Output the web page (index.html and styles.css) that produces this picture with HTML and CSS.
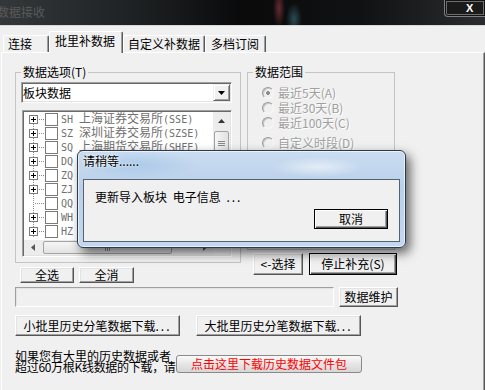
FILE: index.html
```html
<!DOCTYPE html>
<html lang="zh-CN">
<head>
    <meta charset="UTF-8">
    <title>数据接收</title>
    <link rel="stylesheet" href="styles.css">
</head>
<body>
    <div class="titlebar">
        <span class="title">数据接收</span>
        <div class="close-btn">X</div>
    </div>

    <div class="tabs">
        <div class="tab tab-conn">连接</div>
        <div class="tab tab-batch active">批里补数据</div>
        <div class="tab tab-custom">自定义补数据</div>
        <div class="tab tab-sub">多档订阅</div>
    </div>

    <div class="panel">
        <div class="top-row">
            <div class="col-left">
                <fieldset class="group group-opts">
                    <legend>数据选项(T)</legend>
                    <div class="combo">
                        <span>板块数据</span>
                        <div class="combo-btn">
                            <svg width="7" height="4" viewBox="0 0 7 4"><polygon points="0,0 7,0 3.5,4" fill="#000"/></svg>
                        </div>
                    </div>
                    <div class="listbox">
                        <div class="tree">
                            <div class="node"><i class="exp"></i><i class="link"></i><i class="check"></i><span class="label"><span class="en">SH </span>上海证券交易所<span class="en">(SSE)</span></span></div>
                            <div class="node"><i class="exp"></i><i class="link"></i><i class="check"></i><span class="label"><span class="en">SZ </span>深圳证券交易所<span class="en">(SZSE)</span></span></div>
                            <div class="node"><i class="exp"></i><i class="link"></i><i class="check"></i><span class="label"><span class="en">SQ </span>上海期货交易所<span class="en">(SHFE)</span></span></div>
                            <div class="node"><i class="exp"></i><i class="link"></i><i class="check"></i><span class="label"><span class="en">DQ </span>大连商品交易所<span class="en">(DCE)</span></span></div>
                            <div class="node"><i class="exp"></i><i class="link"></i><i class="check"></i><span class="label"><span class="en">ZQ </span>郑州商品交易所<span class="en">(CZCE)</span></span></div>
                            <div class="node"><i class="exp"></i><i class="link"></i><i class="check"></i><span class="label"><span class="en">ZJ </span>中国金融期货交易所<span class="en">(CFFEX)</span></span></div>
                            <div class="node leaf"><i class="link"></i><i class="check"></i><span class="label"><span class="en">QQ </span>全球指数</span></div>
                            <div class="node"><i class="exp"></i><i class="link"></i><i class="check"></i><span class="label"><span class="en">WH </span>外汇</span></div>
                            <div class="node"><i class="exp"></i><i class="link"></i><i class="check"></i><span class="label"><span class="en">HZ </span>香港指数</span></div>
                        </div>
                        <div class="vscroll">
                            <div class="sb-arrow">
                                <svg width="7" height="4" viewBox="0 0 7 4"><polygon points="0,4 7,4 3.5,0" fill="#333"/></svg>
                            </div>
                            <div class="sb-thumb-v">
                                <svg width="7" height="7" viewBox="0 0 7 7"><path d="M0 1.5h7M0 3.5h7M0 5.5h7" stroke="#888" stroke-width="1"/></svg>
                            </div>
                        </div>
                        <div class="hscroll">
                            <div class="sb-arrow">
                                <svg width="4" height="7" viewBox="0 0 4 7"><polygon points="4,0 4,7 0,3.5" fill="#555"/></svg>
                            </div>
                            <div class="sb-thumb-h">
                                <svg width="7" height="7" viewBox="0 0 7 7"><path d="M1.5 0v7M3.5 0v7M5.5 0v7" stroke="#888" stroke-width="1"/></svg>
                            </div>
                            <div class="sb-track"></div>
                            <div class="sb-arrow">
                                <svg width="4" height="7" viewBox="0 0 4 7"><polygon points="0,0 0,7 4,3.5" fill="#555"/></svg>
                            </div>
                        </div>
                        <div class="sb-corner"></div>
                    </div>
                </fieldset>
                <div class="btn-row">
                    <button class="btn btn-all">全选</button>
                    <button class="btn btn-none">全消</button>
                </div>
            </div>

            <div class="col-right">
                <fieldset class="group group-range">
                    <legend>数据范围</legend>
                    <div class="radio checked"><i></i>最近5天(A)</div>
                    <div class="radio"><i></i>最近30天(B)</div>
                    <div class="radio"><i></i>最近100天(C)</div>
                    <div class="radio radio-custom"><i></i>自定义时段(D)</div>
                </fieldset>
                <div class="btn-row">
                    <button class="btn btn-pick">&lt;-选择</button>
                    <button class="btn default btn-stop">停止补充(S)</button>
                </div>
            </div>
        </div>

        <div class="maint-row">
            <div class="field"></div>
            <button class="btn btn-maint">数据维护</button>
        </div>

        <div class="dl-row">
            <button class="btn btn-dl">小批里历史分笔数据下载<span class="dots">...</span></button>
            <button class="btn btn-dl">大批里历史分笔数据下载<span class="dots">...</span></button>
        </div>

        <div class="pkg-row">
            <div class="pkg-text">
                <div>如果您有大里的历史数据或者</div>
                <div class="tight">超过60万根K线数据的下载，请</div>
            </div>
            <button class="btn-pkg">点击这里下载历史数据文件包</button>
        </div>
    </div>

    <!-- 进度对话框 -->
    <div class="dialog">
        <div class="dialog-title">请稍等......</div>
        <div class="dialog-body">
            <div class="dialog-msg">更新导入板块 电子信息 <span class="dots">...</span></div>
            <div class="dialog-actions">
                <button class="btn default btn-cancel">取消</button>
            </div>
        </div>
    </div>
</body>
</html>
```

FILE: styles.css
```css
* {
    box-sizing: border-box;
}
html, body {
    margin: 0;
}
body {
    width: 485px;
    height: 390px;
    overflow: hidden;
    position: relative;
    background: #f0f0f0;
    font-family: "Noto Sans CJK SC", "Liberation Sans", sans-serif;
    font-size: 12px;
    line-height: 14px;
    color: #000;
}

/* title bar */
.titlebar {
    height: 26px;
    display: flex;
    justify-content: space-between;
    align-items: flex-start;
    border-bottom: 1px solid #d8d8d8;
    background:
        radial-gradient(6px 20px at 279px 8px, rgba(190,70,80,.5), transparent),
        radial-gradient(8px 16px at 294px 19px, rgba(90,170,185,.4), transparent),
        linear-gradient(90deg, #34383b 0%, #1e2123 28%, #0a0a0b 50%, #111213 75%, #2a2c2f 100%);
}
.title {
    margin-left: -3px;
    padding-top: 5px;
    color: #5a5a5a;
}
.close-btn {
    width: 41px;
    height: 17px;
    padding: 2px 0 0 21px;
    border: 1px solid #7e7e7e;
    border-top: 0;
    border-right: 0;
    border-radius: 0 0 0 4px;
    background: #1a1a1a;
    box-shadow: inset 0 0 0 1px #111, inset 0 0 0 2px #6e6e6e;
    color: #fff;
    font-family: "Liberation Sans", sans-serif;
    font-weight: bold;
    font-size: 11px;
    line-height: 12px;
}

/* tabs */
.tabs {
    display: flex;
    align-items: flex-end;
    height: 21px;
    margin-top: 5px;
    padding-left: 3px;
    position: relative;
    z-index: 1;
}
.tab {
    height: 17px;
    padding-left: 4px;
    border-top: 1px solid #fff;
    border-left: 1px solid #fff;
    border-right: 1px solid #5a5a5a;
    border-radius: 2px 2px 0 0;
    box-shadow: inset -1px 0 #a0a0a0;
    line-height: 15px;
    white-space: nowrap;
}
.tab.active {
    height: 22px;
    margin-bottom: -1px;
    background: #f0f0f0;
    line-height: 17px;
}
.tab-conn { width: 46px; }
.tab-batch { width: 74px; padding-left: 5px; }
.tab-custom { width: 82px; }
.tab-sub { width: 61px; padding-left: 5px; }

.panel {
    height: 338px;
    margin-left: 1px;
    padding: 12px 0 0 13px;
    border-top: 1px solid #fff;
    border-left: 1px solid #fff;
    border-right: 1px solid #5a5a5a;
    box-shadow: inset -1px 0 #a0a0a0;
}

.top-row {
    display: flex;
    gap: 6px;
}
.col-left { width: 226px; }
.col-right { width: 150px; }

.group {
    margin: 0;
    min-width: 0;
    border: 1px solid #c4c4c4;
}
.group legend {
    padding: 0 2px;
    line-height: 14px;
}
.group-opts {
    padding: 3px 8px 5px 5px;
}
.group-range {
    width: 148px;
    height: 185px;
    padding: 6px 5px 0 5px;
}

/* combo box */
.combo {
    display: flex;
    align-items: center;
    height: 21px;
    padding-left: 1px;
    border: 1px solid;
    border-color: #a0a0a0 #fff #fff #a0a0a0;
    box-shadow: inset 1px 1px #696969, inset -1px -1px #e3e3e3;
    background: #fff;
}
.combo-btn {
    display: flex;
    align-items: center;
    justify-content: center;
    width: 17px;
    height: 17px;
    margin-left: auto;
    margin-right: 1px;
    background: #f0f0f0;
    border: 1px solid;
    border-color: #f0f0f0 #696969 #696969 #f0f0f0;
    box-shadow: inset 1px 1px #fff, inset -1px -1px #a0a0a0;
}

/* tree list */
.listbox {
    display: grid;
    grid-template-columns: 1fr 17px;
    grid-template-rows: 128px 15px;
    height: 147px;
    margin: 7px 0 0 1px;
    padding: 1px;
    border: 1px solid;
    border-color: #a0a0a0 #fff #fff #a0a0a0;
    box-shadow: inset 1px 1px #696969, inset -1px -1px #e3e3e3;
    background: #fff;
}
.tree {
    overflow: hidden;
    min-width: 0;
}
.node {
    display: flex;
    align-items: center;
    height: 14px;
    color: #707070;
    white-space: nowrap;
    background: linear-gradient(#8a8a8a 50%, transparent 50%) 9px 0 / 1px 2px repeat-y;
}
.node > * {
    flex: none;
}
.node:first-child {
    background:
        linear-gradient(#fff, #fff) 0 0 / 100% 6px no-repeat,
        linear-gradient(#8a8a8a 50%, transparent 50%) 9px 0 / 1px 2px repeat-y;
}
.exp {
    width: 9px;
    height: 9px;
    margin-left: 5px;
    border: 1px solid #7b7b7b;
    background:
        linear-gradient(#000, #000) center / 5px 1px no-repeat,
        linear-gradient(#000, #000) center / 1px 5px no-repeat,
        #fff;
}
.link {
    width: 7px;
    height: 1px;
    background: linear-gradient(90deg, transparent 50%, #8a8a8a 50%) 0 0 / 2px 1px repeat-x;
}
.leaf .link {
    width: 11px;
    margin-left: 10px;
}
.check {
    width: 13px;
    height: 13px;
    border: 1px solid #7a7a7a;
    background: #fff;
}
.label {
    margin-left: 3px;
}
.en {
    font-family: "DejaVu Sans Mono", monospace;
    font-size: 10px;
    white-space: pre;
}

.vscroll {
    background: #ececec;
}
.sb-arrow {
    display: flex;
    align-items: center;
    justify-content: center;
    width: 17px;
    height: 17px;
    flex: none;
}
.hscroll .sb-arrow {
    height: 15px;
}
.sb-thumb-v {
    display: flex;
    align-items: center;
    justify-content: center;
    height: 24px;
    margin: 2px 1px 0;
    border: 1px solid #a3a3a3;
    border-radius: 2px;
    background: linear-gradient(90deg, #f6f6f6, #e2e2e2);
}
.hscroll {
    display: flex;
    min-width: 0;
    background: #ececec;
}
.sb-thumb-h {
    display: flex;
    align-items: center;
    justify-content: center;
    width: 129px;
    flex: none;
    margin: 1px 0 1px 2px;
    border: 1px solid #a3a3a3;
    border-radius: 2px;
    background: linear-gradient(#f6f6f6, #e2e2e2);
}
.sb-track {
    flex: 1;
}
.sb-corner {
    background: #f0f0f0;
}

/* radios */
.radio {
    display: flex;
    align-items: center;
    height: 15px;
    color: #a0a0a0;
    text-shadow: 1px 1px #fff;
    white-space: nowrap;
}
.radio i {
    width: 12px;
    height: 12px;
    margin: 0 4px 0 9px;
    border: 1px solid;
    border-color: #9a9a9a #f8f8f8 #f8f8f8 #9a9a9a;
    border-radius: 50%;
    background: #f0f0f0;
    box-shadow: inset 1px 1px #c8c8c8;
}
.radio.checked i {
    background: radial-gradient(circle, #8c8c8c 1.6px, #f0f0f0 2.2px);
}
.radio-custom {
    margin-top: 5px;
}

/* buttons */
.btn {
    font: inherit;
    color: #000;
    background: #f0f0f0;
    padding: 0;
    border: 1px solid;
    border-color: #fff #555 #555 #fff;
    box-shadow: inset -1px -1px #a0a0a0, inset 1px 1px #e3e3e3;
    white-space: nowrap;
}
.btn.default {
    border-color: #000;
    box-shadow: inset 1px 1px #fff, inset -1px -1px #555, inset -2px -2px #a0a0a0;
}
.btn-row {
    display: flex;
}
.col-left .btn-row {
    gap: 5px;
    margin: 4px 0 0 5px;
}
.col-left .btn {
    height: 16px;
    line-height: 12px;
}
.btn-all { width: 54px; }
.btn-none { width: 55px; }
.col-right .btn-row {
    gap: 6px;
    margin: 3px 0 0 6px;
}
.btn-pick { width: 50px; height: 22px; }
.btn-stop { width: 88px; height: 22px; }

.maint-row {
    display: flex;
    gap: 5px;
    margin-top: 4px;
}
.field {
    width: 319px;
    height: 20px;
    border: 1px solid;
    border-color: #a0a0a0 #fff #fff #a0a0a0;
    box-shadow: inset 1px 1px #e3e3e3;
}
.btn-maint { width: 59px; height: 20px; }

.dl-row {
    display: flex;
    gap: 16px;
    margin-top: 8px;
}
.btn-dl { width: 165px; height: 21px; }
.dots { letter-spacing: 2px; }

.pkg-row {
    display: flex;
    align-items: flex-end;
    margin-top: 14px;
}
.pkg-text {
    width: 161px;
    padding-bottom: 1px;
    line-height: 11px;
    white-space: nowrap;
}
.tight { letter-spacing: -0.3px; }
.btn-pkg {
    width: 186px;
    height: 18px;
    padding: 0;
    font: inherit;
    line-height: 14px;
    color: #f00;
    border: 1px solid #8a8a8a;
    border-radius: 3px;
    background: linear-gradient(#fafafa, #e6e6e6 50%, #d6d6d6);
}

/* progress dialog */
.dialog {
    position: absolute;
    left: 77px;
    top: 150px;
    width: 329px;
    height: 98px;
    padding: 0 5px 5px;
    border: 1px solid #2c3a49;
    border-radius: 6px;
    background:
        radial-gradient(45px 10px at 240px 16px, rgba(255,255,255,.55), transparent),
        radial-gradient(60px 14px at 60px 14px, rgba(150,190,230,.5), transparent),
        linear-gradient(#cadcf0, #b9d0ea 40%, #c3d8ee);
    box-shadow: 4px 5px 11px rgba(0,0,0,.6), inset 0 0 0 1px rgba(255,255,255,.6);
}
.dialog-title {
    height: 28px;
    padding-top: 3px;
    line-height: 14px;
    text-shadow: 0 0 4px #fff, 0 0 2px #fff;
}
.dialog-body {
    height: 63px;
    padding: 10px 11px 12px;
    border: 1px solid #56626f;
    background: #f0f0f0;
}
.dialog-msg {
    line-height: 14px;
    word-spacing: 3px;
    white-space: nowrap;
}
.dialog-actions {
    display: flex;
    justify-content: flex-end;
    margin-top: 5px;
}
.btn-cancel {
    width: 74px;
    height: 20px;
}
```
